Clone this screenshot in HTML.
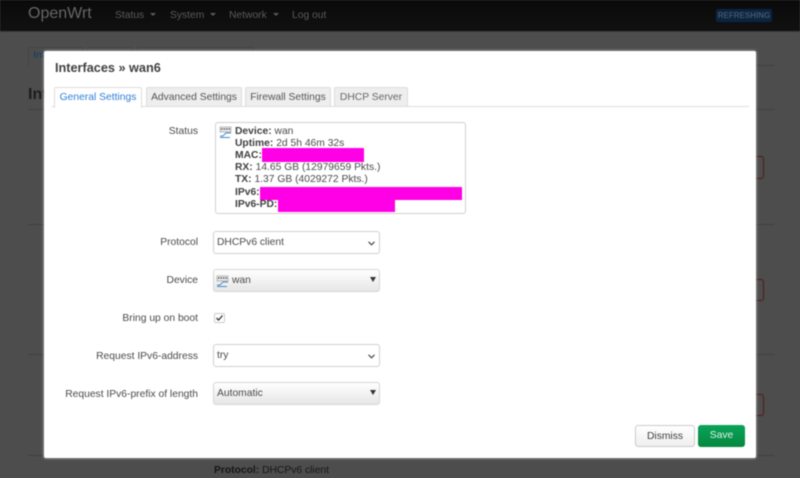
<!DOCTYPE html>
<html><head><meta charset="utf-8"><style>
html,body{margin:0;padding:0;background:#4d4d4d}
body{width:800px;height:478px;overflow:hidden;position:relative;font-family:"Liberation Sans",sans-serif;font-size:10.3px;color:#4a4a4a}
#w{left:0;top:0;width:800px;height:478px;overflow:hidden;background:#4d4d4d;filter:blur(.42px)}
div,span{position:absolute;white-space:nowrap;box-sizing:border-box}
b{font-weight:bold}
.hd{left:0;top:0;width:800px;height:32px;background:linear-gradient(#0a0a0a,#111);border-bottom:1px solid #3a3a3a}
.nav{top:10px;font-size:10.3px;color:#5a5a5a;line-height:12px}
.nav i{display:inline-block;width:0;height:0;border:3px solid transparent;border-top-color:#5a5a5a;border-bottom:0;margin-left:3px;vertical-align:2px}
.ln{height:1px;background:#404040}
.red{width:8px;border:1px solid #4f1a14;border-left:0;border-radius:0 3px 3px 0}
.modal{left:44px;top:51px;width:712px;height:407px;background:#fff;border-radius:2px;box-shadow:0 0 2px 1px rgba(190,190,190,.5)}
.tab{top:87px;height:19px;background:#eee;border:1px solid #ddd;border-bottom:0;border-radius:2px 2px 0 0;text-align:center;line-height:19px;color:#555}
.lb{right:602px;text-align:right;line-height:12px;color:#4a4a4a}
.sel{left:213px;width:167px;height:23px;border:1px solid #d0d0d0;border-radius:3px;line-height:22px;padding-left:3px;background:#fff;color:#4a4a4a}
.sel2{background:linear-gradient(#fff,#e6e6e6);border-color:#d6d6d6}
.st{left:235px;line-height:12px;color:#4a4a4a}
.st b{color:#404040}
.mg{background:#ff00e6}
.arr{right:4px;top:9px}
.tri{right:3px;top:7px;width:0;height:0;border:3px solid transparent;border-top:5.5px solid #333;border-bottom:0}
</style></head><body><div id="w">
<div class="hd"></div>
<div style="left:28px;top:4px;font-size:16px;line-height:20px;color:#666">OpenWrt</div>
<div class="nav" style="left:115px">Status <i></i></div>
<div class="nav" style="left:170px">System <i></i></div>
<div class="nav" style="left:229px">Network <i></i></div>
<div class="nav" style="left:292px">Log out</div>
<div style="left:716px;top:9px;width:56px;height:13px;background:#0b2440;border-radius:2px;color:#44566a;font-size:8px;font-weight:bold;line-height:13px;text-align:center">REFRESHING</div>

<div style="left:28px;top:47px;width:56px;height:19px;border:1px solid #444;border-bottom:0;border-radius:2px 2px 0 0"></div>
<div style="left:33px;top:50px;line-height:12px;color:#123a66">Int</div>
<div style="left:87px;top:47px;width:46px;height:18px;border:1px solid #444;border-bottom:0"></div>
<div style="left:137px;top:47px;width:117px;height:18px;border:1px solid #444;border-bottom:0"></div>
<div class="ln" style="left:84px;top:65px;width:691px"></div>
<div style="left:28px;top:85px;font-size:16px;font-weight:bold;line-height:20px;color:#1c1c1c">Int</div>
<div class="ln" style="left:28px;top:109px;width:747px"></div>
<div class="ln" style="left:28px;top:224px;width:747px"></div>
<div class="ln" style="left:28px;top:354px;width:747px"></div>
<div class="ln" style="left:28px;top:455px;width:747px"></div>
<div class="red" style="left:756px;top:156px;height:23px"></div>
<div class="red" style="left:756px;top:279px;height:22px"></div>
<div class="red" style="left:756px;top:394px;height:22px"></div>
<div style="left:214px;top:465px;line-height:12px;color:#161616"><b>Protocol:</b> DHCPv6 client</div>

<div class="modal"></div>
<div style="left:55px;top:60px;font-size:12.7px;font-weight:bold;line-height:16px;color:#404040">Interfaces » wan6</div>
<div style="left:52px;top:106px;width:697px;height:1px;background:#ddd"></div>
<div class="tab" style="left:54px;width:88px;height:21px;background:#fff;color:#2f7fd6">General Settings</div>
<div class="tab" style="left:146px;width:96px">Advanced Settings</div>
<div class="tab" style="left:245px;width:86px">Firewall Settings</div>
<div class="tab" style="left:334px;width:74px;color:#666">DHCP Server</div>

<div class="lb" style="top:126px">Status</div>
<div style="left:215px;top:122px;width:251px;height:92px;border:1px solid #d0d0d0;border-radius:3px"></div>
<svg style="position:absolute;left:219px;top:126px" width="13" height="13" viewBox="0 0 13 13"><rect x="1" y="1" width="11" height="5" fill="#e4e4e4" stroke="#888" stroke-width=".5"/><path d="M2 3h9" stroke="#333" stroke-dasharray="1.5 1"/><path d="M1 10h3l3-3h5M1 11.5h10" stroke="#4a8ac8" fill="none" stroke-width=".9"/></svg>
<div class="st" style="top:126px"><b>Device:</b> wan</div>
<div class="st" style="top:138px"><b>Uptime:</b> 2d 5h 46m 32s</div>
<div class="st" style="top:150px"><b>MAC:</b></div>
<div class="mg" style="left:262px;top:148px;width:102px;height:14px"></div>
<div class="st" style="top:162px"><b>RX:</b> 14.65 GB (12979659 Pkts.)</div>
<div class="st" style="top:174px"><b>TX:</b> 1.37 GB (4029272 Pkts.)</div>
<div class="st" style="top:187px"><b>IPv6:</b></div>
<div class="mg" style="left:260px;top:187px;width:202px;height:13px"></div>
<div class="st" style="top:199px"><b>IPv6-PD:</b></div>
<div class="mg" style="left:278px;top:200px;width:117px;height:12px"></div>

<div class="lb" style="top:237px">Protocol</div>
<div class="sel" style="top:231px">DHCPv6 client<svg class="arr" style="position:absolute" width="7" height="5" viewBox="0 0 7 5"><path d="M.5 .8l3 3 3-3" fill="none" stroke="#444" stroke-width="1.1"/></svg></div>
<div class="lb" style="top:275px">Device</div>
<div class="sel sel2" style="top:269px;padding-left:18px">wan<svg style="position:absolute;left:2px;top:5px" width="13" height="13" viewBox="0 0 13 13"><rect x="1" y="1" width="11" height="5" fill="#e4e4e4" stroke="#888" stroke-width=".5"/><path d="M2 3h9" stroke="#333" stroke-dasharray="1.5 1"/><path d="M1 10h3l3-3h5M1 11.5h10" stroke="#4a8ac8" fill="none" stroke-width=".9"/></svg><span class="tri"></span></div>
<div class="lb" style="top:313px">Bring up on boot</div>
<div style="left:214px;top:313px;width:11px;height:10px;border:1px solid #ccc;border-radius:2px"></div>
<svg style="position:absolute;left:215px;top:314px" width="9" height="8" viewBox="0 0 9 8"><path d="M1.5 4l2 2L7.5 1.5" fill="none" stroke="#333" stroke-width="1.3"/></svg>
<div class="lb" style="top:351px">Request IPv6-address</div>
<div class="sel" style="top:344px">try<svg class="arr" style="position:absolute" width="7" height="5" viewBox="0 0 7 5"><path d="M.5 .8l3 3 3-3" fill="none" stroke="#444" stroke-width="1.1"/></svg></div>
<div class="lb" style="top:389px">Request IPv6-prefix of length</div>
<div class="sel sel2" style="top:382px">Automatic<span class="tri"></span></div>

<div style="left:635px;top:425px;width:60px;height:22px;border:1px solid #ccc;border-radius:3px;background:linear-gradient(#fff,#efefef);text-align:center;line-height:21px;color:#404040">Dismiss</div>
<div style="left:698px;top:425px;width:47px;height:22px;border-radius:3px;background:linear-gradient(#0aa35a,#06873f);text-align:center;line-height:22px;color:#dff3e8">Save</div>
</div></body></html>
